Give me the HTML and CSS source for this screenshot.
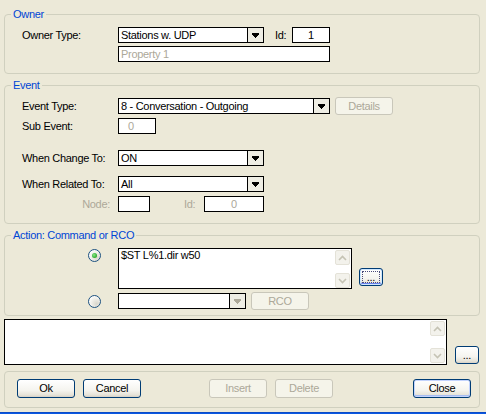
FILE: index.html
```html
<!DOCTYPE html>
<html>
<head>
<meta charset="utf-8">
<link rel="stylesheet" href="styles.css">
</head>
<body>
<div class="dialog">

  <div class="group g-owner">
    <div class="gtitle">Owner</div>
    <div class="row r-o1">
      <span class="lbl">Owner Type:</span>
      <div class="combo w146">
        <span class="ctext">Stations w. UDP</span>
        <span class="carrow"><svg width="7" height="5" viewBox="0 0 7 5"><path d="M0 0h7v2H0zM1 2h5v1H1zM2 3h3v1H2zM3 4h1v1H3z" fill="#000"/></svg></span>
      </div>
      <span class="lbl-id">Id:</span>
      <div class="edit w38 center">1</div>
    </div>
    <div class="row r-o2">
      <span class="lbl"></span>
      <div class="edit w212 gray">Property 1</div>
    </div>
  </div>

  <div class="group g-event">
    <div class="gtitle">Event</div>
    <div class="row r-e1">
      <span class="lbl">Event Type:</span>
      <div class="combo w212">
        <span class="ctext">8 - Conversation - Outgoing</span>
        <span class="carrow"><svg width="7" height="5" viewBox="0 0 7 5"><path d="M0 0h7v2H0zM1 2h5v1H1zM2 3h3v1H2zM3 4h1v1H3z" fill="#000"/></svg></span>
      </div>
      <div class="btn disabled b-details">Details</div>
    </div>
    <div class="row r-e2">
      <span class="lbl">Sub Event:</span>
      <div class="edit w38 gray sub">0</div>
    </div>
    <div class="row r-e3">
      <span class="lbl">When Change To:</span>
      <div class="combo w146">
        <span class="ctext">ON</span>
        <span class="carrow"><svg width="7" height="5" viewBox="0 0 7 5"><path d="M0 0h7v2H0zM1 2h5v1H1zM2 3h3v1H2zM3 4h1v1H3z" fill="#000"/></svg></span>
      </div>
    </div>
    <div class="row r-e4">
      <span class="lbl">When Related To:</span>
      <div class="combo w146">
        <span class="ctext">All</span>
        <span class="carrow"><svg width="7" height="5" viewBox="0 0 7 5"><path d="M0 0h7v2H0zM1 2h5v1H1zM2 3h3v1H2zM3 4h1v1H3z" fill="#000"/></svg></span>
      </div>
    </div>
    <div class="row r-e5">
      <span class="lbl right gtext">Node:</span>
      <div class="edit w32"></div>
      <span class="lbl-id2 gtext">Id:</span>
      <div class="edit w60 gray center">0</div>
    </div>
  </div>

  <div class="group g-action">
    <div class="gtitle">Action: Command or RCO</div>
    <div class="row r-a1">
      <span class="radiocell"><span class="radio on"><span class="dot"></span></span></span>
      <div class="memo m-cmd">
        <div class="memotext">$ST L%1.dir w50</div>
        <div class="sbar">
          <span class="sbtn"><svg width="9" height="6" viewBox="0 0 9 6"><path d="M1 5L4.5 1.5L8 5" stroke="#C5C3B4" stroke-width="1.6" fill="none"/></svg></span>
          <span class="sbtn"><svg width="9" height="6" viewBox="0 0 9 6"><path d="M1 1L4.5 4.5L8 1" stroke="#C5C3B4" stroke-width="1.6" fill="none"/></svg></span>
        </div>
      </div>
      <div class="btn focus b-dots1"><span class="focusrect">...</span></div>
    </div>
    <div class="row r-a2">
      <span class="radiocell"><span class="radio"></span></span>
      <div class="combo w128">
        <span class="ctext"></span>
        <span class="carrow dis"><svg width="7" height="5" viewBox="0 0 7 5"><path d="M0 0h7v2H0zM1 2h5v1H1zM2 3h3v1H2zM3 4h1v1H3z" fill="#ACA899"/></svg></span>
      </div>
      <div class="btn disabled b-rco">RCO</div>
    </div>
  </div>

  <div class="row r-big">
    <div class="memo m-big">
      <div class="memotext"></div>
      <div class="sbar">
        <span class="sbtn"><svg width="9" height="6" viewBox="0 0 9 6"><path d="M1 5L4.5 1.5L8 5" stroke="#C5C3B4" stroke-width="1.6" fill="none"/></svg></span>
        <span class="sbtn"><svg width="9" height="6" viewBox="0 0 9 6"><path d="M1 1L4.5 4.5L8 1" stroke="#C5C3B4" stroke-width="1.6" fill="none"/></svg></span>
      </div>
    </div>
    <div class="btn b-dots2">...</div>
  </div>

  <div class="group g-buttons">
    <div class="btn b-ok">Ok</div>
    <div class="btn b-cancel">Cancel</div>
    <div class="btn disabled b-insert">Insert</div>
    <div class="btn disabled b-delete">Delete</div>
    <div class="btn default b-close">Close</div>
  </div>

  <div class="bluebar"></div>
</div>
</body>
</html>
```

FILE: styles.css
```css
* { box-sizing: border-box; }
html, body { margin: 0; padding: 0; }
body {
  width: 486px;
  height: 414px;
  overflow: hidden;
  background: #ECE9D8;
  font-family: "Liberation Sans", Arial, sans-serif;
  font-size: 11px;
  letter-spacing: -0.3px;
  line-height: 13px;
  color: #000;
}
.dialog {
  padding-top: 14px;
  display: flex;
  flex-direction: column;
}

/* group boxes */
.group {
  margin-left: 4px;
  width: 476px;
  border: 1px solid #D0D0BF;
  border-radius: 4px;
  padding-left: 17px;
}
.gtitle {
  width: max-content;
  height: 13px;
  line-height: 13px;
  margin: -7px 0 0 -11px;
  padding: 0 2px;
  background: #ECE9D8;
  color: #0046D5;
}
.g-owner { height: 60px; }
.g-event { height: 139px; margin-top: 11px; }
.g-action { height: 81px; margin-top: 11px; }

/* rows */
.row { display: flex; align-items: center; }
.lbl { width: 96px; flex-shrink: 0; white-space: nowrap; }
.lbl.right { text-align: right; padding-right: 8px; }
.gtext { color: #ACA899; }
.lbl-id { width: 17px; margin-left: 11px; }
.lbl-id2 { width: 20px; margin-left: 34px; }

.r-o1 { margin-top: 6px; height: 16px; }
.r-o2 { margin-top: 3px; height: 16px; }
.r-e1 { margin-top: 5px; height: 18px; }
.r-e2 { margin-top: 3px; height: 16px; }
.r-e3 { margin-top: 16px; height: 16px; }
.r-e4 { margin-top: 10px; height: 16px; }
.r-e5 { margin-top: 4px; height: 16px; }
.r-a1 { margin-top: 6px; align-items: flex-start; }
.r-a2 { margin-top: 3px; height: 18px; }

/* edits & combos */
.edit, .combo {
  height: 16px;
  border: 1px solid #000;
  background: #fff;
  line-height: 14px;
  flex-shrink: 0;
  white-space: nowrap;
  overflow: hidden;
}
.edit { padding-left: 2px; }
.edit.center { text-align: center; padding-left: 0; }
.edit.gray { color: #ACA899; }
.edit.sub { padding-left: 9px; }
.w32 { width: 32px; }
.w38 { width: 38px; }
.w60 { width: 60px; }
.w128 { width: 128px; }
.w146 { width: 146px; }
.w212 { width: 212px; }

.combo { display: flex; }
.ctext { flex: 1; padding-left: 2px; overflow: hidden; }
.carrow {
  width: 16px;
  border-left: 1px solid #000;
  background: #EEEDE4;
  display: flex;
  align-items: center;
  justify-content: center;
}
.carrow svg { display: block; shape-rendering: crispEdges; }
.carrow.dis { border-left-color: #000; }

/* buttons */
.btn {
  height: 19px;
  width: 58px;
  flex-shrink: 0;
  border: 1px solid #003C74;
  border-radius: 3px;
  background: linear-gradient(#FFFFFF 0%, #F5F4EF 60%, #E6E3D8 88%, #D6D0C5 100%);
  text-align: center;
  line-height: 17px;
}
.btn.disabled {
  border-color: #C9C7BA;
  background: #F5F4EA;
  color: #ACA899;
}
.btn.default {
  box-shadow: inset 0 0 0 1px #C3D3FD, inset 0 -1px 0 1px #A7BDF1;
}
.b-details { margin-left: 5px; height: 18px; line-height: 16px; }
.b-rco { margin-left: 5px; height: 18px; line-height: 16px; }
.b-dots1 {
  width: 24px;
  height: 18px;
  margin-left: 7px;
  margin-top: 20px;
  padding: 2px;
  box-shadow: inset 0 0 0 1px #CEE7FF, inset 0 -1px 0 1px #6982EE;
  display: flex;
}
.focusrect {
  flex: 1;
  border: 1px dotted #4A4A7A;
  line-height: 10px;
  text-align: center;
}
.b-dots2 {
  width: 24px;
  height: 18px;
  line-height: 16px;
  margin-left: 8px;
  align-self: flex-end;
  margin-bottom: 1px;
}

/* radios */
.radiocell { width: 96px; flex-shrink: 0; padding-left: 66px; display: flex; }
.r-a1 .radiocell { margin-top: 1px; }
.r-a2 .radiocell { align-items: center; }
.radio {
  width: 13px;
  height: 13px;
  border-radius: 50%;
  border: 1px solid #1C5180;
  background: radial-gradient(circle at 70% 70%, #D8D6CC 0%, #ECEBE4 40%, #FFFFFF 80%);
  display: flex;
  align-items: center;
  justify-content: center;
}
.dot {
  width: 5px;
  height: 5px;
  border-radius: 50%;
  background: radial-gradient(circle at 40% 40%, #8CE68C 0%, #37B437 60%, #1E8E1E 100%);
}

/* memo */
.memo {
  border: 1px solid #000;
  background: #fff;
  display: flex;
  flex-shrink: 0;
}
.m-cmd { width: 234px; height: 41px; }
.m-big { width: 443px; height: 46px; }
.r-big { margin-top: 3px; margin-left: 4px; align-items: stretch; }
.memotext { flex: 1; padding-left: 2px; white-space: nowrap; }
.sbar {
  width: 16px;
  display: flex;
  flex-direction: column;
  justify-content: space-between;
  padding: 1px 0 0 0;
}
.m-big .sbar { padding: 1px 0 1px 0; }
.sbtn {
  width: 15px;
  height: 15px;
  border: 1px solid #E4E2D8;
  border-radius: 2px;
  background: #F3F2EC;
  display: flex;
  align-items: center;
  justify-content: center;
}
.sbtn svg { display: block; }

/* bottom buttons */
.g-buttons {
  margin-top: 6px;
  height: 37px;
  padding: 7px 0 0 12px;
  display: flex;
  align-items: flex-start;
}
.b-cancel { margin-left: 8px; }
.b-insert { margin-left: 68px; }
.b-delete { margin-left: 8px; }
.b-close { margin-left: 80px; }

.bluebar {
  margin-top: 4px;
  height: 3px;
  background: #0A58E2;
  border-top: 1px solid #0B4BC7;
}
```
